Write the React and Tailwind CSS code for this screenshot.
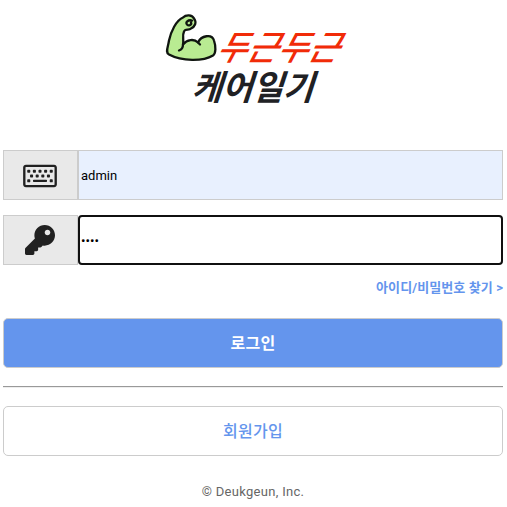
import React from "react";
import { FaKey, FaRegKeyboard } from "react-icons/fa";

function Arm() {
  return (
    <svg viewBox="0 0 52 50" width="52" height="50" fill="#b9eb92" stroke="#101510" strokeWidth="2.3" strokeLinecap="round" strokeLinejoin="round">
      <path d="M18 4 C21 1 27 1 29 5 C32 9 30 13 26 15 C24 17 20 15 19 18 C17 22 19 26 18 31 C22 26 29 25 33 29 C36 22 47 20 49 27 C51 33 51 40 48 42 C38 48 17 48 4 41 C0 39 3 34 4 27 C6 18 11 7 18 4 Z" />
      <path d="M18 31 C18 34 17 36 14 37 M33 29 L35 31 M27 7 C23 6 20 9 22 11 C24 13 27 11 26 9" fill="none" />
    </svg>
  );
}

function Logo() {
  return (
    <h1 className="flex h-[100px] justify-center">
      <svg viewBox="0 0 190 100" className="h-[100px] w-[190px] overflow-visible" fontFamily="'Noto Sans CJK KR', sans-serif">
        <g transform="translate(7 0.5)"><Arm /></g>
        <text transform="translate(57 47) skewX(-28) scale(1 1.08)" fontSize="32" fontWeight="500" fill="#f12b08" textLength="122" lengthAdjust="spacingAndGlyphs">두근두근</text>
        <text transform="translate(33 87) skewX(-18)" fontSize="34.5" fontWeight="700" fill="#202124" textLength="122" lengthAdjust="spacingAndGlyphs">케어일기</text>
      </svg>
    </h1>
  );
}

function Field({ icon, children }) {
  return (
    <div className="flex h-[50px]">
      <div className="flex w-[75px] items-center justify-center border border-[#ccc] bg-[#e9e9e9] text-[#212121]">{icon}</div>
      {children}
    </div>
  );
}

export default function App() {
  return (
    <main className="h-[507px] w-[507px] overflow-hidden bg-white pl-[3px] pr-1 pt-[13px] font-['Roboto','Noto_Sans_CJK_KR',sans-serif]">
      <Logo />
      <form className="mt-[37px] flex flex-col" onSubmit={(e) => e.preventDefault()}>
        <Field icon={<FaRegKeyboard className="mr-0.5 mt-px h-[30px] w-[34px]" />}>
          <input defaultValue="admin" className="min-w-0 flex-1 border border-[#ccc] bg-[#e8f0fe] px-0.5 pt-0.5 text-[13px] text-black outline-none" />
        </Field>
        <div className="h-[15px]" />
        <Field icon={<FaKey className="mr-0.5 size-[30px]" />}>
          <input type="password" defaultValue="1234" className="min-w-0 flex-1 rounded-[4px] border-2 border-[#101010] bg-white px-px pt-0.5 text-[13.3px] text-black outline-none" />
        </Field>
        <a className="mt-3 h-5 self-end whitespace-nowrap text-[13px] font-bold leading-[22px] tracking-[0.1px] text-[#6495ed]">아이디/비밀번호 찾기 &gt;</a>
        <button className="mt-[21px] h-[50px] rounded-[5px] border border-[#ccc] bg-[#6495ed] pt-px text-base font-bold tracking-[0.3px] text-white">로그인</button>
        <hr className="mt-[18px] h-0.5 border-t border-b border-t-[#999] border-b-[#eee]" />
        <button className="mt-[18px] h-[50px] rounded-[5px] border border-[#ccc] bg-white pt-0.5 text-base font-medium tracking-[0.3px] text-[#6495ed]">회원가입</button>
      </form>
      <footer className="mt-[25px] text-center text-[13px] leading-[22px] tracking-[0.3px] text-[#666]">© Deukgeun, Inc.</footer>
    </main>
  );
}
